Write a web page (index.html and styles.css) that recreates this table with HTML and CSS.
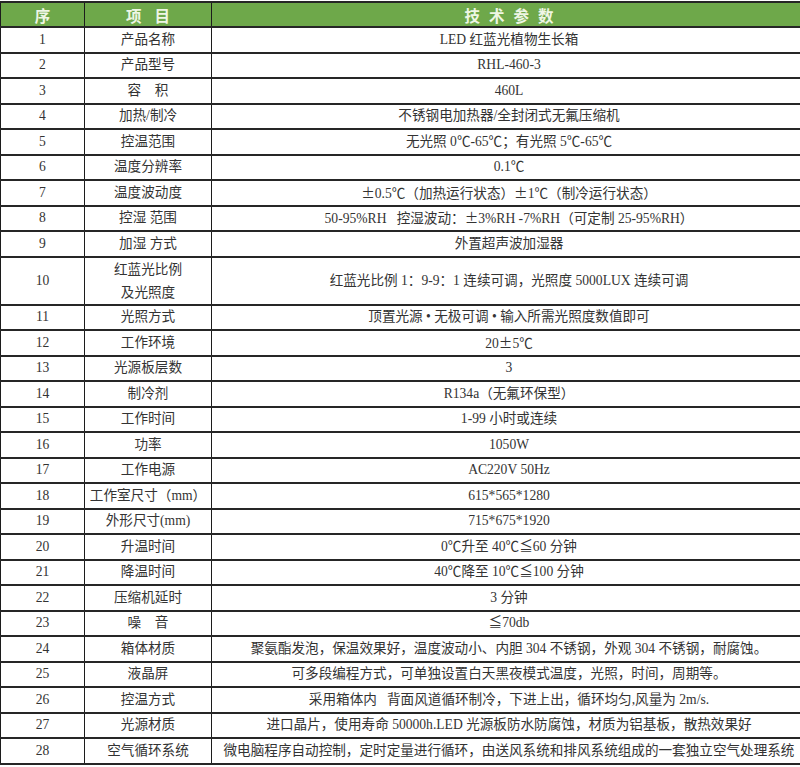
FILE: index.html
```html
<!DOCTYPE html>
<html lang="zh-CN">
<head>
<meta charset="utf-8">
<title>技术参数</title>
<link rel="stylesheet" href="styles.css">
</head>
<body>
<table class="spec">
  <colgroup>
    <col class="c-no">
    <col class="c-item">
    <col class="c-val">
  </colgroup>
  <thead>
    <tr>
      <th class="h-no">序</th>
      <th class="h-item">项目</th>
      <th class="h-val">技术参数</th>
    </tr>
  </thead>
  <tbody>
    <tr><td>1</td><td>产品名称</td><td>LED 红蓝光植物生长箱</td></tr>
    <tr><td>2</td><td>产品型号</td><td>RHL-460-3</td></tr>
    <tr><td>3</td><td>容　积</td><td>460L</td></tr>
    <tr><td>4</td><td>加热/制冷</td><td>不锈钢电加热器/全封闭式无氟压缩机</td></tr>
    <tr><td>5</td><td>控温范围</td><td>无光照 0℃-65℃；有光照 5℃-65℃</td></tr>
    <tr><td>6</td><td>温度分辨率</td><td>0.1℃</td></tr>
    <tr><td>7</td><td>温度波动度</td><td><span class="fw">±</span>0.5℃（加热运行状态）<span class="fw">±</span>1℃（制冷运行状态）</td></tr>
    <tr><td>8</td><td>控湿 范围</td><td>50-95%RH&nbsp;&nbsp;&nbsp;控湿波动：<span class="fw">±</span>3%RH -7%RH（可定制 25-95%RH）</td></tr>
    <tr><td>9</td><td>加湿 方式</td><td>外置超声波加湿器</td></tr>
    <tr class="tall"><td>10</td><td>红蓝光比例<br>及光照度</td><td>红蓝光比例 1：9-9：1 连续可调，光照度 5000LUX 连续可调</td></tr>
    <tr><td>11</td><td>光照方式</td><td>顶置光源 • 无极可调 • 输入所需光照度数值即可</td></tr>
    <tr><td>12</td><td>工作环境</td><td>20<span class="fw">±</span>5℃</td></tr>
    <tr><td>13</td><td>光源板层数</td><td>3</td></tr>
    <tr><td>14</td><td>制冷剂</td><td>R134a（无氟环保型）</td></tr>
    <tr><td>15</td><td>工作时间</td><td>1-99 小时或连续</td></tr>
    <tr><td>16</td><td>功率</td><td>1050W</td></tr>
    <tr><td>17</td><td>工作电源</td><td>AC220V 50Hz</td></tr>
    <tr><td>18</td><td>工作室尺寸（mm）</td><td>615*565*1280</td></tr>
    <tr><td>19</td><td>外形尺寸(mm)</td><td>715*675*1920</td></tr>
    <tr><td>20</td><td>升温时间</td><td>0℃升至 40℃≦60 分钟</td></tr>
    <tr><td>21</td><td>降温时间</td><td>40℃降至 10℃≦100 分钟</td></tr>
    <tr><td>22</td><td>压缩机延时</td><td>3 分钟</td></tr>
    <tr><td>23</td><td>噪　音</td><td>≦70db</td></tr>
    <tr><td>24</td><td>箱体材质</td><td>聚氨酯发泡，保温效果好，温度波动小、内胆 304 不锈钢，外观 304 不锈钢，耐腐蚀。</td></tr>
    <tr><td>25</td><td>液晶屏</td><td>可多段编程方式，可单独设置白天黑夜模式温度，光照，时间，周期等。</td></tr>
    <tr><td>26</td><td>控温方式</td><td>采用箱体内&nbsp;&nbsp;&nbsp;背面风道循环制冷，下进上出，循环均匀,风量为 2m/s.</td></tr>
    <tr><td>27</td><td>光源材质</td><td>进口晶片，使用寿命 50000h.LED 光源板防水防腐蚀，材质为铝基板，散热效果好</td></tr>
    <tr><td>28</td><td>空气循环系统</td><td>微电脑程序自动控制，定时定量进行循环，由送风系统和排风系统组成的一套独立空气处理系统</td></tr>
  </tbody>
</table>
</body>
</html>
```
FILE: styles.css
```css
html, body {
  margin: 0;
  padding: 0;
  background: #ffffff;
}
body {
  padding-top: 1px;
  overflow: hidden;
}
.spec {
  border-collapse: collapse;
  table-layout: fixed;
  width: 806px;
  font-family: "Liberation Serif", "Noto Sans CJK SC", serif;
  font-size: 13.6px;
  color: #333333;
}
.c-no { width: 84px; }
.c-item { width: 127px; }
.c-val { width: 595px; }
.spec th,
.spec td {
  border-left: 1px solid #1c1c1c;
  border-right: 1px solid #1c1c1c;
  border-top: 2px solid #262626;
  border-bottom: 2px solid #262626;
  text-align: center;
  vertical-align: middle;
  padding: 0 2px;
  white-space: nowrap;
  line-height: 20px;
}
.spec thead tr {
  height: 25px;
}
.spec th {
  background: #6ea84a;
  color: #eef6e4;
  font-weight: bold;
  font-size: 15.5px;
  font-family: "Noto Sans CJK SC", serif;
}
.h-item {
  letter-spacing: 13px;
  text-indent: 13px;
}
.h-val {
  letter-spacing: 9px;
  text-indent: 9px;
}
.spec tbody tr {
  height: 25.5px;
}
.spec tbody tr.tall {
  height: 48px;
}
.spec tbody tr.tall td {
  line-height: 23px;
}
.fw {
  font-family: "Noto Sans CJK SC", sans-serif;
}
```
